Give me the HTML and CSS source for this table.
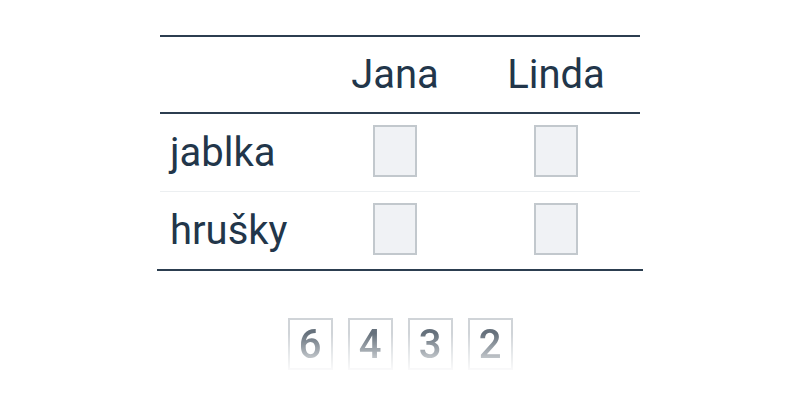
FILE: index.html
```html
<!DOCTYPE html>
<html lang="cs">
<head>
<meta charset="utf-8">
<link rel="stylesheet" href="styles.css">
</head>
<body>
<div class="page">
  <div class="table">
    <div class="row head">
      <div class="cell label"></div>
      <div class="cell">Jana</div>
      <div class="cell">Linda</div>
    </div>
    <div class="row body first">
      <div class="cell label">jablka</div>
      <div class="cell"><span class="box"></span></div>
      <div class="cell"><span class="box"></span></div>
    </div>
    <div class="row body">
      <div class="cell label">hrušky</div>
      <div class="cell"><span class="box"></span></div>
      <div class="cell"><span class="box"></span></div>
    </div>
    <div class="bottom-rule"></div>
  </div>
  <div class="tiles">
    <div class="tile">6</div>
    <div class="tile">4</div>
    <div class="tile">3</div>
    <div class="tile">2</div>
  </div>
</div>
</body>
</html>
```
FILE: styles.css
```css
html, body {
  margin: 0;
  padding: 0;
  background: #ffffff;
}
.page {
  width: 800px;
  height: 400px;
  display: flex;
  flex-direction: column;
  align-items: center;
  padding-top: 35px;
  box-sizing: border-box;
  font-family: Roboto, "Liberation Sans", sans-serif;
  color: #22364a;
}
.table {
  width: 480px;
  border-top: 2px solid #2c3e50;
  display: flex;
  flex-direction: column;
}
.row {
  display: grid;
  grid-template-columns: 158px 154px 168px;
  font-size: 40px;
}
.head {
  height: 75px;
  border-bottom: 2px solid #2c3e50;
}
.body {
  height: 77px;
}
.body.first {
  border-bottom: 1px solid #eceff1;
}
.row.body:last-of-type {
  height: 76px;
}
.cell {
  display: flex;
  align-items: center;
  justify-content: center;
}
.cell.label {
  justify-content: flex-start;
  padding-left: 10px;
}
.box {
  width: 44px;
  height: 52px;
  box-sizing: border-box;
  border: 2px solid #c2c8cd;
  background: #f0f2f5;
  margin-bottom: 4px;
  margin-right: 1px;
}
.bottom-rule {
  height: 2px;
  background: #2c3e50;
  margin: 0 -3px;
}
.tiles {
  display: flex;
  gap: 15px;
  margin-top: 47px;
}
.tile {
  width: 45px;
  height: 52px;
  box-sizing: border-box;
  border: 2px solid #d0d4d8;
  display: flex;
  align-items: center;
  justify-content: center;
  font-size: 40px;
  font-weight: 500;
  color: #66717c;
  -webkit-mask-image: linear-gradient(to bottom, #000 30%, rgba(0,0,0,0.12) 100%);
  mask-image: linear-gradient(to bottom, #000 30%, rgba(0,0,0,0.12) 100%);
}
```
